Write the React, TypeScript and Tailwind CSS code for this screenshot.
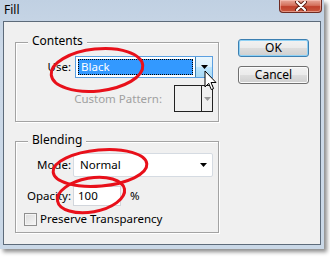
import React from 'react';

const GroupBox: React.FC<{ title: string; className?: string; children: React.ReactNode }> = ({ title, className, children }) => (
  <div className={`relative w-[204px] border border-[#a3a3a3] shadow-[inset_1px_1px_0_#fff,1px_1px_0_#fff] ${className ?? ''}`}>
    <span className="absolute left-[12px] top-[-9px] bg-[#f0f0f0] px-[4px] text-[12px] leading-[14px] text-black">{title}</span>
    {children}
  </div>
);

const Arrow: React.FC<{ color?: string }> = ({ color = '#000' }) => (
  <svg width="7" height="4" viewBox="0 0 7 4">
    <path d="M0 0h7L3.5 4z" fill={color} />
  </svg>
);

const DialogButton: React.FC<{ label: string; focused?: boolean; className?: string }> = ({ label, focused, className }) => (
  <button
    className={`h-[18px] w-[71px] rounded-[3px] border text-[12px] leading-[14px] text-black bg-[linear-gradient(#f2f2f2_0%,#ebebeb_48%,#dddddd_52%,#cfcfcf_100%)] ${
      focused ? 'border-[#3c7fb1] shadow-[inset_0_0_0_1px_#8ed1f5]' : 'border-[#707070] shadow-[inset_0_0_0_1px_#fbfbfb]'
    } ${className ?? ''}`}
  >
    {label}
  </button>
);

const App: React.FC = () => {
  return (
    <div className="relative h-[257px] w-[330px] overflow-hidden bg-white font-['Noto_Sans',sans-serif] text-[11.5px] text-black">
      {/* window */}
      <div className="flex h-[249px] w-[324px] flex-col bg-[linear-gradient(#c0d0e2,#ccd9e8_20%,#cad8e7)] shadow-[3px_3px_4px_rgba(0,0,0,0.45)]">
        <div className="flex h-[21px] items-start justify-between pl-[4px] pr-[2px]">
          <span className="mt-[3px] text-[12px] leading-[14px]">Fill</span>
          <div className="flex h-[13px] w-[43px] items-center justify-center rounded-b-[4px] border border-t-0 border-[#6e2b22] bg-[linear-gradient(#e8a89a,#d4705c_45%,#c0402c_55%,#c9583f)] shadow-[inset_0_0_0_1px_rgba(255,210,200,0.5)]">
            <svg width="12" height="10" viewBox="0 0 12 10">
              <path d="M2 1l8 8M10 1L2 9" stroke="#5a1a10" strokeWidth="4" strokeLinecap="round" />
              <path d="M2 1l8 8M10 1L2 9" stroke="#fff" strokeWidth="2.2" strokeLinecap="round" />
            </svg>
          </div>
        </div>

        <div className="mx-[3px] mb-[4px] flex flex-1 border border-[#5d6b7a] bg-[#f0f0f0] pl-[11px]">
          {/* left column */}
          <div className="flex flex-col">
            <GroupBox title="Contents" className="mt-[20px] h-[80px]">
              <div className="flex items-center pt-[13px]">
                <span className="w-[55px] text-right leading-[14px]">Use:</span>
                <div className="ml-[4px] flex h-[22px] w-[138px] border border-[#5b9fe0] bg-white">
                  <div className="m-[2px] flex flex-1 items-center border border-dotted border-black bg-[#3399ff] pl-[2px] leading-[14px] text-white">
                    Black
                  </div>
                  <div className="flex w-[17px] items-center justify-center border-l border-[#3c7fb1] bg-[linear-gradient(#eaf6fd,#d9f0fc_50%,#bee6fd_50%,#a7d9f5)]">
                    <Arrow />
                  </div>
                </div>
              </div>
              <div className="mt-[7px] flex items-center justify-end pr-[5px]">
                <span className="mr-[12px] leading-[14px] text-[#a0a0a0]">Custom Pattern:</span>
                <div className="flex h-[27px] w-[39px] border border-[#222]">
                  <div className="flex-1 border-r border-[#222]" />
                  <div className="flex w-[10px] items-center justify-center">
                    <Arrow color="#9a9a9a" />
                  </div>
                </div>
              </div>
            </GroupBox>

            <GroupBox title="Blending" className="mt-[19px] h-[92px]">
              <div className="flex items-center pt-[11px]">
                <span className="w-[55px] text-right leading-[14px]">Mode:</span>
                <div className="ml-[2px] flex h-[24px] w-[140px] items-center justify-between rounded-[2px] border border-[#d5dbe2] bg-white pl-[6px] pr-[5px]">
                  <span className="leading-[14px]">Normal</span>
                  <Arrow />
                </div>
              </div>
              <div className="mt-[9px] flex items-center">
                <span className="w-[55px] text-right leading-[14px]">Opacity:</span>
                <div className="ml-[2px] flex h-[20px] w-[48px] items-center border border-[#d2d6dc] bg-white pl-[4px] leading-[14px]">
                  100
                </div>
                <span className="ml-[9px] leading-[14px]">%</span>
              </div>
              <div className="mt-[6px] flex items-center pl-[8px]">
                <div className="h-[13px] w-[13px] border border-[#8f8f8f] bg-[linear-gradient(135deg,#dcdcdc,#f6f6f6)] shadow-[inset_0_0_0_1px_#f4f4f4]" />
                <span className="ml-[3px] leading-[14px]">Preserve Transparency</span>
              </div>
            </GroupBox>
          </div>

          {/* right column */}
          <div className="ml-[19px] flex flex-col">
            <DialogButton label="OK" focused className="mt-[17px]" />
            <DialogButton label="Cancel" className="mt-[9px]" />
          </div>
        </div>
      </div>

      {/* annotation circles */}
      <svg className="pointer-events-none absolute left-0 top-0" width="330" height="257" viewBox="0 0 330 257">
        <g fill="none" stroke="#e8101a" strokeWidth="3">
          <ellipse cx="97" cy="70" rx="46" ry="21" transform="rotate(-6 97 70)" />
          <ellipse cx="100" cy="168" rx="47" ry="18" transform="rotate(-5 100 168)" />
          <ellipse cx="91" cy="195" rx="34" ry="17" transform="rotate(-10 91 195)" />
        </g>
      </svg>

      {/* mouse cursor */}
      <svg className="pointer-events-none absolute left-[204px] top-[70px]" width="14" height="21" viewBox="0 0 14 21">
        <path d="M1 1v16l3.7-3.7 2.6 6.3 2.3-1-2.6-6.1H12z" fill="#fff" stroke="#000" strokeWidth="1" strokeLinejoin="round" />
      </svg>
    </div>
  );
};

export default App;
